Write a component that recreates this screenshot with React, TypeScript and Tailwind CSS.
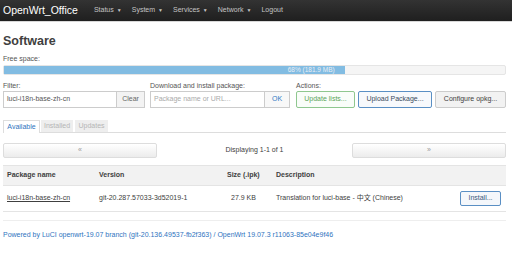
import React from 'react';

const navItems = ['Status', 'System', 'Services', 'Network'];

const Caret = () => <span className="ml-[3px] inline-block text-[5px] align-middle">▼</span>;

const App: React.FC = () => {
  return (
    <div className="w-[512px] h-[256px] overflow-hidden bg-white text-[7px] text-[#404040]" style={{ fontFamily: '"Liberation Sans", Arial, "Noto Sans CJK SC", sans-serif' }}>
      {/* top bar */}
      <div className="h-[22px] flex items-center bg-gradient-to-b from-[#333333] to-[#1f1f1f] border-b border-[#d8d8d8]">
        <span className="pl-[3px] pr-[16px] text-[10.5px] text-white">OpenWrt_Office</span>
        {navItems.map((n) => (
          <span key={n} className="mr-[10px] text-[#c4c4c4]">
            {n}
            <Caret />
          </span>
        ))}
        <span className="text-[#c4c4c4]">Logout</span>
      </div>

      <div className="pl-[3px] pr-[6px]">
        <h2 className="mt-[11px] text-[12.5px] font-bold leading-[16px] text-[#404040]">Software</h2>

        <div className="mt-[5px] leading-[9px] text-[#555]">Free space:</div>
        <div className="mt-[2px] h-[10px] bg-[#f5f5f5] border border-[#e5e5e5] rounded-[2px] flex">
          <div className="w-[68%] h-full bg-[#82bce2] flex items-center justify-end pr-[10px] text-[6.5px] text-[#e8eef5]">68% (181.9 MB)</div>
        </div>

        <div className="mt-[6px] flex">
          <div className="w-[147px]">
            <div className="leading-[9px] text-[#555]">Filter:</div>
            <div className="mt-[1px] flex h-[17px]">
              <div className="w-[114px] border border-[#cccccc] flex items-center pl-[3px] text-[#555]">luci-i18n-base-zh-cn</div>
              <div className="w-[28px] border border-l-0 border-[#cccccc] bg-[#f3f3f3] flex items-center justify-center text-[#666]">Clear</div>
            </div>
          </div>
          <div className="w-[146px]">
            <div className="leading-[9px] text-[#555]">Download and install package:</div>
            <div className="mt-[1px] flex h-[17px]">
              <div className="w-[115px] border border-[#cccccc] flex items-center pl-[3px] text-[#aaa]">Package name or URL...</div>
              <div className="w-[25px] border border-l-0 border-[#cccccc] bg-[#f8f8f8] flex items-center justify-center text-[#2f7ac4]">OK</div>
            </div>
          </div>
          <div className="flex-1">
            <div className="leading-[9px] text-[#555]">Actions:</div>
            <div className="mt-[1px] flex h-[17px] gap-[3px]">
              <div className="w-[59px] border border-[#8fc78f] rounded-[2px] bg-[#f9fdf9] flex items-center justify-center text-[#5aa55a]">Update lists...</div>
              <div className="w-[74px] border border-[#5a8fc4] rounded-[2px] bg-[#f7f9fc] flex items-center justify-center text-[#3a4a5c]">Upload Package...</div>
              <div className="w-[71px] border border-[#cccccc] rounded-[2px] bg-[#f2f2f2] flex items-center justify-center text-[#404040]">Configure opkg...</div>
            </div>
          </div>
        </div>

        {/* tabs */}
        <div className="mt-[12px] flex h-[13px] border-b border-[#dddddd] items-end">
          <div className="w-[37px] h-[13px] border border-b-0 border-[#dddddd] bg-white flex items-center justify-center text-[#2f74c0] -mb-px">Available</div>
          <div className="ml-[1px] w-[32px] h-[12px] bg-[#eeeeee] flex items-center justify-center text-[#b5b5b5]">Installed</div>
          <div className="ml-[2px] w-[33px] h-[12px] bg-[#eeeeee] flex items-center justify-center text-[#b5b5b5]">Updates</div>
        </div>

        {/* pager */}
        <div className="mt-[10px] flex h-[15px] items-center">
          <div className="w-[154px] h-full border border-[#dddddd] rounded-[2px] bg-gradient-to-b from-white to-[#ececec] flex items-center justify-center text-[#999]">«</div>
          <div className="flex-1 text-center text-[#404040]">Displaying 1-1 of 1</div>
          <div className="w-[154px] h-full border border-[#dddddd] rounded-[2px] bg-gradient-to-b from-white to-[#ececec] flex items-center justify-center text-[#999]">»</div>
        </div>

        {/* table */}
        <div className="mt-[7px]">
          <div className="flex h-[21px] items-center bg-[#f2f2f2] border-t border-b border-[#e4e4e4] font-bold text-[#404040]">
            <div className="w-[96px] pl-[4px]">Package name</div>
            <div className="w-[128px]">Version</div>
            <div className="w-[49px]">Size (.ipk)</div>
            <div className="flex-1">Description</div>
          </div>
          <div className="flex h-[26px] items-center border-b border-[#e4e4e4] text-[#404040]">
            <div className="w-[96px] pl-[4px] underline">luci-i18n-base-zh-cn</div>
            <div className="w-[128px]">git-20.287.57033-3d52019-1</div>
            <div className="w-[49px] pl-[4px]">27.9 KB</div>
            <div className="flex-1">Translation for luci-base - 中文 (Chinese)</div>
            <div className="mr-[5px] w-[41px] h-[15px] border border-[#5a8fc4] rounded-[2px] bg-[#f4f7fb] flex items-center justify-center text-[#3a5a80]">Install...</div>
          </div>
        </div>

        {/* footer */}
        <div className="mt-[8px] border-t border-[#eeeeee] pt-[9px] text-[#2f74c0] leading-[9px]">
          Powered by LuCI openwrt-19.07 branch (git-20.136.49537-fb2f363) / OpenWrt 19.07.3 r11063-85e04e9f46
        </div>
      </div>
    </div>
  );
};

export default App;
